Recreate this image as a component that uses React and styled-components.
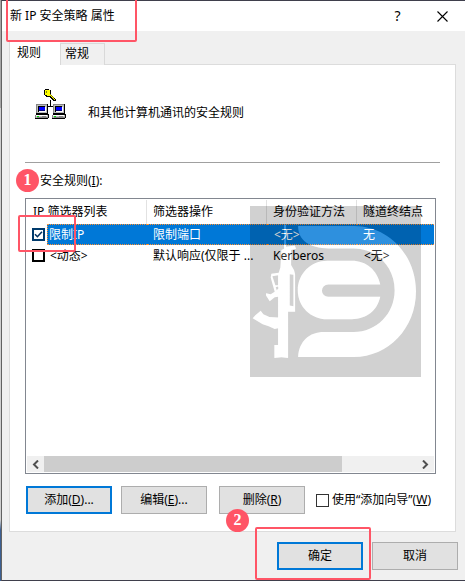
import React from 'react';
import styled, { createGlobalStyle, css } from 'styled-components';

const GlobalStyle = createGlobalStyle`
  * {
    box-sizing: border-box;
  }

  body {
    margin: 0;
    background: #3a3a46;
    color: #000;
    font-family: 'Noto Sans', 'Noto Sans CJK SC', sans-serif;
    font-size: 12px;
    line-height: 20px;
  }

  button,
  input {
    margin: 0;
    font: inherit;
    color: inherit;
  }
`;

const Desktop = styled.div`
  padding-left: 1px;
  background: linear-gradient(#a6a6a6 0 108px, #cfcfcf 108px 520px, #3c5f92 530px);
`;

const Dialog = styled.main`
  border: 1px solid #3f3f4c;
  border-left-color: #626262;
  border-right: 0;
  background: #f0f0f0;
`;

const TitleBar = styled.header`
  position: relative;
  display: flex;
  align-items: center;
  height: 30px;
  padding-left: 8px;
  background: #fff;

  h1 {
    flex: 1;
    margin: 0;
    font-size: 12px;
    font-weight: 400;
  }
`;

const TitleButton = styled.button`
  display: flex;
  justify-content: center;
  align-items: center;
  width: 45px;
  height: 30px;
  padding: 0;
  border: 0;
  background: transparent;
  font-size: 14px;
`;

const Tabs = styled.nav`
  display: flex;
  align-items: flex-end;
  height: 34px;
  padding: 0 7px;
`;

const Tab = styled.button`
  height: 22px;
  width: 45px;
  padding: 0 7px 2px 4px;
  border: 1px solid #d9d9d9;
  border-bottom: 0;
  background: #f0f0f0;
  line-height: 20px;
  text-align: left;

  ${props =>
    props.$active &&
    css`
      width: 51px;
      height: 25px;
      margin-bottom: -1px;
      padding: 0 7px 2px;
      border-right: 0;
      background: #fff;
      z-index: 1;
    `}
`;

const Panel = styled.section`
  margin: -1px 9px 0 7px;
  padding: 24px 15px 17px;
  border: 1px solid #dcdcdc;
  background: #fff;
`;

const Intro = styled.div`
  display: flex;
  align-items: flex-start;
  gap: 21px;
  height: 74px;
  padding-left: 10px;
  border-bottom: 1px solid #a0a0a0;

  p {
    margin: 14px 0 0;
  }
`;

const IntroIcon = styled.svg`
  width: 32px;
  height: 32px;
`;

const ListLabel = styled.h2`
  position: relative;
  margin: 0;
  padding: 8px 0 7px 15px;
  font-size: 12px;
  font-weight: 400;
`;

const ListBox = styled.div`
  position: relative;
  display: flex;
  flex-direction: column;
  margin-right: 4px;
  padding: 1px;
  border: 1px solid #828790;
`;

const ListArea = styled.div`
  min-height: 256px;
`;

const Table = styled.table`
  width: 100%;
  border-collapse: collapse;
  table-layout: fixed;
  white-space: nowrap;

  th,
  td {
    padding: 0;
    font-weight: 400;
    text-align: left;
  }
`;

const HeadCell = styled.th`
  width: ${props => props.$width};

  div {
    height: 24px;
    padding: 2px 0 0 6px;
    border-right: 1px solid #e2e2e2;
  }

  &:last-child div {
    border-right: 0;
  }
`;

const selectedCell = css`
  border: 1px dotted #ff9030;
  border-width: 1px 0;
  background: #0078d7;
  color: #fff;
`;

const Cell = styled.div`
  height: 21px;
  padding-left: ${props => (props.$indent ? '7px' : '6px')};
  border: 1px solid transparent;
  border-width: 1px 0;
  line-height: 19px;
  ${props => props.$selected && selectedCell}
`;

const FirstCell = styled.div`
  display: flex;
  align-items: center;
  gap: 2px;
  padding-left: 5px;

  ${Cell} {
    flex: 1;
    padding-left: ${props => (props.$selected ? '1px' : '3px')};
    border-left-width: ${props => (props.$selected ? '1px' : '0')};
  }
`;

const checkMark = css`
  background: #fff
    url("data:image/svg+xml,%3Csvg xmlns='http://www.w3.org/2000/svg' viewBox='0 0 9 9'%3E%3Cpath d='M1 4.3l2.4 2.4L8 1.8' fill='none' stroke='%23003060' stroke-width='1.6'/%3E%3C/svg%3E")
    center / 9px 9px no-repeat;
`;

const CheckBox = styled.input.attrs({ type: 'checkbox' })`
  appearance: none;
  flex: none;
  width: 13px;
  height: 13px;
  border: ${props => (props.$thin ? '1px solid #333' : '2px solid #000')};
  background: #fff;

  &:checked {
    border-color: #003a6c;
    ${checkMark}
  }
`;

const ScrollBar = styled.div`
  display: flex;
  height: 16px;
  background: #f0f0f0;
`;

const ScrollArrow = styled.button`
  display: flex;
  justify-content: center;
  align-items: center;
  width: 17px;
  padding: 0;
  border: 0;
  background: #f0f0f0;
`;

const Track = styled.div`
  flex: 1;
`;

const Thumb = styled.div`
  width: 80%;
  height: 100%;
  background: #cdcdcd;
`;

const Actions = styled.div`
  display: flex;
  align-items: center;
  margin-top: 12px;
  padding-left: 1px;
`;

const Button = styled.button`
  width: 86px;
  height: 28px;
  padding: 0;
  border: ${props => (props.$primary ? '2px solid #0078d7' : '1px solid #adadad')};
  background: #e1e1e1;
`;

const ActionSlot = styled.div`
  position: relative;
  margin-right: ${props => props.$gap};
`;

const WizardLabel = styled.label`
  display: flex;
  align-items: center;
  gap: 3px;
  white-space: nowrap;
`;

const Footer = styled.footer`
  display: flex;
  justify-content: flex-end;
  gap: 9px;
  padding: 10px 7px;
`;

const Mark = styled.span`
  position: absolute;
  inset: ${props => props.$inset};
  border: 2px solid #ff5566;
  border-radius: 2px;
  pointer-events: none;
  z-index: 2;
`;

const TitleText = styled.div`
  flex: 1;
`;

const Badge = styled.span`
  position: absolute;
  top: ${props => props.$top};
  left: ${props => props.$left};
  z-index: 3;
  width: 23px;
  height: 23px;
  border-radius: 50%;
  background: #ff5566;
  color: #fff;
  font: bold 16px/22px 'Liberation Serif', serif;
  text-align: center;
`;

const Watermark = styled.svg`
  position: absolute;
  top: 7px;
  right: 14px;
  width: 171px;
  height: 171px;
  pointer-events: none;
`;

const LogoShapes = ({ fill }) => (
  <g fill={fill}>
    <path d='M198 108H365C468 108 551 194 551 304S468 500 365 500H198C201 452 232 425 275 425H365C432 425 487 371 487 300S432 175 365 175H290C232 175 198 150 198 108Z' />
    <path d='M444 283C435 240 402 212 359 212H285C236 212 197 251 197 300S236 387 285 387H359C402 387 435 362 444 320H288A18.500 18.500 0 0 1 288 283Z' />
    <path
      fillRule='evenodd'
      d='M156 104H162V170L188 166L192 176L177 180V225L186 240L189 252V365H168V503L148 501L127 503V464H138V414L128 416L110 408L92 402L62 384L70 375L86 362L94 372L112 380L138 382V320L128 321L113 333L102 316V309L116 312L128 305L116 262L118 251L140 248L145 232L148 180L156 176ZM121 258L130 285H138V255ZM173 252V346L184 348V254ZM138 289L131 291L134 300L139 295Z'
    />
  </g>
);

const RifleLogo = () => (
  <Watermark viewBox='54 48 512 512' aria-hidden='true'>
    <mask id='logo-cutout' maskUnits='userSpaceOnUse' x='54' y='48' width='512' height='512'>
      <path fill='#fff' d='M54 48h512v512H54z' />
      <LogoShapes fill='#000' />
    </mask>
    <path
      fill='#000'
      fillOpacity='0.18'
      mask='url(#logo-cutout)'
      d='M54 48h512v512H54z'
    />
    <g opacity='0.18'>
      <LogoShapes fill='#fff' />
    </g>
  </Watermark>
);

const Computer = ({ x }) => (
  <g transform={`translate(${x} 15)`}>
    <path fill='#000' d='M1 0h12v10h1v4h-1v1H0v-4h1z' />
    <path fill='#848484' d='M1 0h11v1H2v8H1zM0 11h12v1H1v2H0z' />
    <path fill='#bdbdbd' d='M2 1h10v8H2zM1 11h12v3H1z' />
    <path fill='#000' d='M3 2h7v1H4v5H3z' />
    <path fill='#fff' d='M4 7h7v1H4zM10 3h1v5h-1zM1 11h11v1H1z' />
    <path fill='#0000ff' d='M4 3h6v4H4z' />
    <path fill='#00007a' d='M4 6h6v1H4z' />
    <path fill='#848484' d='M7 12h4v1H7zM2 13h11v1H2z' />
    <path fill='#00e000' d='M2 12h2v1H2z' />
  </g>
);

const NetworkKeyIcon = () => (
  <IntroIcon viewBox='0 0 32 32' shapeRendering='crispEdges' aria-hidden='true'>
    <path fill='#000' d='M15 11h1v6h-1zM13 17h5v1h-5z' />
    <path
      fill='#000'
      d='M10 0h4v1h2v5h1v1h1v1h1v1h1v1h1v2h-3v-1h-1v-1h-1v-1h-1V8h-4V7h-1V6H9V1h1z'
    />
    <path
      fill='#ffff00'
      d='M10 1h5v5h1v1h1v1h1v1h1v1h1v1h-1v-1h-1v-1h-1V8h-1V7h-4V6h-2z'
    />
    <path fill='#848400' d='M11 2h1v2h-1zM15 5h1v1h1v1h1v1h1v1h-1V8h-1V7h-1V6h-1z' />
    <Computer x={0} />
    <Computer x={17} />
  </IntroIcon>
);

const Chevron = ({ d }) => (
  <svg width='7' height='9' viewBox='0 0 7 9' aria-hidden='true'>
    <path d={d} fill='none' stroke='#505050' strokeWidth='2' />
  </svg>
);

const columns = [
  { name: 'IP 筛选器列表', width: '120px' },
  { name: '筛选器操作', width: '120px' },
  { name: '身份验证方法', width: '90px' },
  { name: '隧道终结点', width: 'auto' },
];

const rules = [
  {
    name: '限制IP',
    action: '限制端口',
    auth: '<无>',
    tunnel: '无',
    active: true,
  },
  {
    name: '<动态>',
    action: '默认响应(仅限于 ...',
    auth: 'Kerberos',
    tunnel: '<无>',
    active: false,
  },
];

const RuleRow = ({ rule }) => (
  <tr>
    <td>
      <FirstCell $selected={rule.active}>
        <CheckBox defaultChecked={rule.active} aria-label={rule.name} />
        <Cell $selected={rule.active}>{rule.name}</Cell>
      </FirstCell>
    </td>
    <td>
      <Cell $selected={rule.active}>{rule.action}</Cell>
    </td>
    <td>
      <Cell $selected={rule.active} $indent={rule.auth[0] === '<'}>
        {rule.auth}
      </Cell>
    </td>
    <td>
      <Cell $selected={rule.active} $indent={rule.tunnel[0] === '<'}>
        {rule.tunnel}
      </Cell>
    </td>
  </tr>
);

const App = () => (
  <Desktop>
    <GlobalStyle />
    <Dialog>
      <TitleBar>
        <TitleText>
          <h1>新 IP 安全策略 属性</h1>
        </TitleText>
        <TitleButton aria-label='帮助'>?</TitleButton>
        <TitleButton aria-label='关闭'>
          <svg width='11' height='11' viewBox='0 0 11 11'>
            <path d='M.5 .5l10 10M10.500 .5l-10 10' stroke='#000' strokeWidth='1.1' />
          </svg>
        </TitleButton>
        <Mark $inset='-4px 328px -11px 4px' />
      </TitleBar>

      <Tabs>
        <Tab $active>规则</Tab>
        <Tab>常规</Tab>
      </Tabs>

      <Panel>
        <Intro>
          <NetworkKeyIcon />
          <p>和其他计算机通讯的安全规则</p>
        </Intro>

        <ListLabel id='rules-label'>
          安全规则(<u>I</u>):
          <Badge $top='6px' $left='-9px'>1</Badge>
        </ListLabel>

        <ListBox>
          <ListArea>
            <Table aria-labelledby='rules-label'>
              <thead>
                <tr>
                  {columns.map(column => (
                    <HeadCell key={column.name} $width={column.width}>
                      <div>{column.name}</div>
                    </HeadCell>
                  ))}
                </tr>
              </thead>
              <tbody>
                {rules.map(rule => (
                  <RuleRow key={rule.name} rule={rule} />
                ))}
              </tbody>
            </Table>
          </ListArea>
          <ScrollBar>
            <ScrollArrow aria-label='向左'>
              <Chevron d='M6 0.500L2 4.500l4 4' />
            </ScrollArrow>
            <Track>
              <Thumb />
            </Track>
            <ScrollArrow aria-label='向右'>
              <Chevron d='M1 0.500l4 4-4 4' />
            </ScrollArrow>
          </ScrollBar>
          <RifleLogo />
          <Mark $inset='16px 359px 221px -8px' />
        </ListBox>

        <Actions>
          <ActionSlot $gap='9px'>
            <Button $primary>
              添加(<u>D</u>)...
            </Button>
          </ActionSlot>
          <ActionSlot $gap='12px'>
            <Button>
              编辑(<u>E</u>)...
            </Button>
          </ActionSlot>
          <ActionSlot $gap='11px'>
            <Button>
              删除(<u>R</u>)
            </Button>
            <Badge $top='23px' $left='7px'>2</Badge>
          </ActionSlot>
          <WizardLabel>
            <CheckBox $thin />
            <span>
              使用“添加向导”(<u>W</u>)
            </span>
          </WizardLabel>
        </Actions>
      </Panel>

      <Footer>
        <ActionSlot $gap='0'>
          <Button $primary>确定</Button>
          <Mark $inset='-15px -8px -10px -22px' />
        </ActionSlot>
        <Button>取消</Button>
      </Footer>
    </Dialog>
  </Desktop>
);

export default App;
